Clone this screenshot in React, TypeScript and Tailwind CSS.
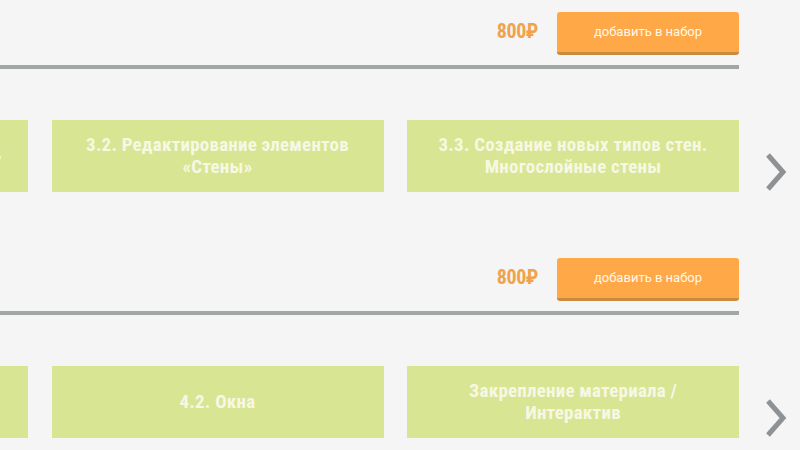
import React from "react";

const condensed = {
  fontFamily: '"Roboto Condensed", "Liberation Sans Narrow", "DejaVu Sans Condensed", sans-serif',
};

function Chevron() {
  return (
    <svg width="22" height="40" viewBox="0 0 22 40" className="block">
      <polyline points="3,3 18,20 3,37" fill="none" stroke="#8f9294" strokeWidth="5" />
    </svg>
  );
}

function Section({ cards, first }: { cards: string[][]; first?: boolean }) {
  return (
    <div className={first ? "pt-[12px]" : "pt-[66px]"}>
      <div className="flex w-[739px] items-center justify-end gap-[19px]">
        <span
          className="-mt-[6px] text-[20px] font-bold leading-none tracking-[-0.4px] text-[#f0a34c]"
          style={condensed}
        >
          800₽
        </span>
        <button
          className="flex h-[43px] w-[182px] items-center justify-center rounded-[3px] border-b-[3px] border-[#c98b40] bg-[#ffa847] pb-[1px] text-[13px] text-[#fff8ea]"
          style={{ fontFamily: "Roboto, sans-serif" }}
        >
          добавить в набор
        </button>
      </div>
      <div className="mt-[10px] h-[4px] w-[739px] bg-[#a3a6a6]" />
      <div className="mt-[51px] flex items-start">
        <div className="-ml-[304px] flex gap-[23.5px]">
          {cards.map((lines, i) => (
            <div
              key={i}
              className="flex h-[72px] w-[332px] flex-col items-center justify-center bg-[#d8e593] text-center text-[19px] font-bold leading-[22px] tracking-[0.2px] text-[#f6f8e4]"
              style={condensed}
            >
              {lines.map((l, j) => (
                <span key={j} className="whitespace-nowrap">{l}</span>
              ))}
            </div>
          ))}
        </div>
        <div className="ml-[26px] mt-[32px]">
          <Chevron />
        </div>
      </div>
    </div>
  );
}

export default function App() {
  return (
    <div className="h-[450px] w-[800px] overflow-hidden bg-[#f5f5f5]">
      <Section
        first
        cards={[
          ["3.1. Создание элементов «Стены»"],
          ["3.2. Редактирование элементов", "«Стены»"],
          ["3.3. Создание новых типов стен.", "Многослойные стены"],
        ]}
      />
      <Section
        cards={[
          ["4.1. Двери"],
          ["4.2. Окна"],
          ["Закрепление материала /", "Интерактив"],
        ]}
      />
    </div>
  );
}
